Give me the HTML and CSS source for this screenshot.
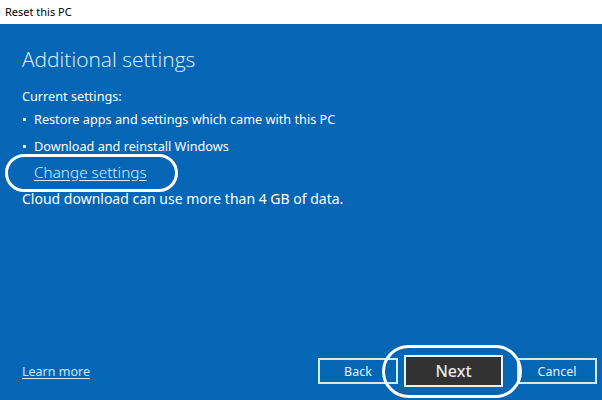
FILE: index.html
```html
<!DOCTYPE html>
<html>
<head>
<meta charset="utf-8">
<link rel="stylesheet" href="styles.css">
</head>
<body>
<div class="titlebar">Reset this PC</div>
<div class="main">
  <h1 class="title">Additional settings</h1>
  <div class="label">Current settings:</div>
  <ul class="list">
    <li class="item item-first">Restore apps and settings which came with this PC</li>
    <li class="item">Download and reinstall Windows</li>
  </ul>
  <div class="change-row"><span class="link-wrap"><a class="link">Change settings</a><span class="ring ring-link"></span></span></div>
  <div class="note">Cloud download can use more than 4 GB of data.</div>
  <div class="spacer"></div>
  <div class="footer">
    <a class="link learn">Learn more</a>
    <div class="buttons">
      <button class="btn">Back</button>
      <span class="next-wrap"><button class="btn btn-next">Next</button><span class="ring ring-next"></span></span>
      <button class="btn">Cancel</button>
    </div>
  </div>
</div>
</body>
</html>
```

FILE: styles.css
```css
html, body {
  margin: 0;
  padding: 0;
}
body {
  width: 602px;
  height: 400px;
  overflow: hidden;
  font-family: "Noto Sans", "Open Sans", sans-serif;
  background: #0566b6;
  display: flex;
  flex-direction: column;
}
.titlebar {
  height: 24px;
  background: #fff;
  color: #000;
  font-size: 11px;
  line-height: 24px;
  padding-left: 5px;
  box-sizing: border-box;
  flex: none;
}
.main {
  flex: 1;
  display: flex;
  flex-direction: column;
  padding: 0 5px 0 22px;
  color: #fff;
  font-size: 12.7px;
}
.title {
  margin: 20px 0 0 0;
  font-family: "Open Sans", sans-serif;
  font-weight: 300;
  font-size: 21px;
  line-height: 30px;
  color: #e6f2fc;
}
.label {
  margin-top: 13px;
  line-height: 18px;
}
.list {
  list-style: none;
  margin: 0;
  padding: 0;
}
.item {
  position: relative;
  padding-left: 12px;
  line-height: 18px;
  margin-top: 9px;
}
.item-first {
  margin-top: 5px;
}
.item::before {
  content: "";
  position: absolute;
  left: 1px;
  top: 8px;
  width: 3px;
  height: 3px;
  background: #fff;
}
.change-row {
  margin-top: 8px;
  padding-left: 12px;
  line-height: 18px;
}
.link-wrap {
  position: relative;
  display: inline-block;
}
.link {
  color: #d8ecfb;
  text-decoration: underline;
  text-underline-offset: 2px;
  font-size: 15.3px;
  font-weight: 300;
}
.ring {
  position: absolute;
  border: 3px solid #fff;
  border-radius: 999px;
  box-sizing: border-box;
}
.ring-link {
  left: -29px;
  right: -31px;
  top: -9px;
  bottom: -10px;
}
.note {
  margin-top: 8px;
  line-height: 18px;
  font-size: 14px;
}
.spacer {
  flex: 1;
}
.footer {
  display: flex;
  align-items: center;
  justify-content: space-between;
  height: 48px;
  margin-bottom: 5px;
}
.learn {
  font-size: 12.5px;
  font-weight: 400;
  color: #cfe5f8;
}
.buttons {
  display: flex;
  align-items: center;
  gap: 6px;
}
.btn {
  font-family: "Noto Sans", "Open Sans", sans-serif;
  width: 80px;
  height: 26px;
  background: transparent;
  border: 2px solid #d6e9f8;
  color: #e8f3fc;
  font-size: 12.5px;
  padding: 0;
  box-sizing: border-box;
}
.next-wrap {
  position: relative;
  display: inline-block;
  margin-right: 8px;
}
.btn-next {
  display: block;
  width: 99px;
  height: 32px;
  background: #333232;
  border: 2px solid #f0f0f0;
  color: #e8e8e8;
  font-size: 16px;
  font-weight: 500;
}
.ring-next {
  left: -22px;
  right: -19px;
  top: -10px;
  bottom: -11px;
}
```
